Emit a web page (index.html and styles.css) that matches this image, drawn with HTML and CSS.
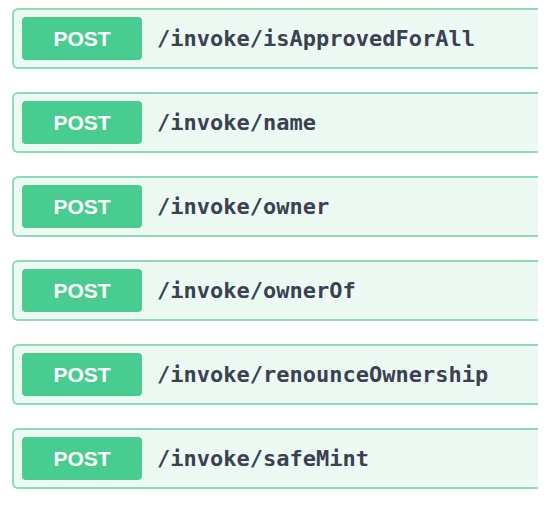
FILE: index.html
```html
<!DOCTYPE html>
<html>
<head>
<meta charset="utf-8">
<link rel="stylesheet" href="styles.css">
</head>
<body>
<div class="list">
  <div class="op"><span class="method">POST</span><span class="path">/invoke/isApprovedForAll</span></div>
  <div class="op"><span class="method">POST</span><span class="path">/invoke/name</span></div>
  <div class="op"><span class="method">POST</span><span class="path">/invoke/owner</span></div>
  <div class="op"><span class="method">POST</span><span class="path">/invoke/ownerOf</span></div>
  <div class="op"><span class="method">POST</span><span class="path">/invoke/renounceOwnership</span></div>
  <div class="op"><span class="method">POST</span><span class="path">/invoke/safeMint</span></div>
</div>
</body>
</html>
```

FILE: styles.css
```css
html, body {
  margin: 0;
  padding: 0;
  background: #ffffff;
}
.list {
  display: flex;
  flex-direction: column;
  gap: 23px;
  padding: 8px 0 0 12px;
  width: 526px;
}
.op {
  box-sizing: border-box;
  height: 61px;
  display: flex;
  align-items: center;
  padding: 0 8px;
  border: 2px solid #8ddcb7;
  border-right: none;
  border-radius: 6px 0 0 6px;
  background: #edfaf4;
}
.method {
  box-sizing: border-box;
  width: 120px;
  height: 43px;
  display: flex;
  align-items: center;
  justify-content: center;
  background: #49cc90;
  border-radius: 4px;
  color: #ffffff;
  font-family: "Liberation Sans", Arial, sans-serif;
  font-weight: 700;
  font-size: 21px;
}
.path {
  margin-left: 15px;
  font-family: "DejaVu Sans Mono", monospace;
  font-weight: 700;
  font-size: 22px;
  color: #3b4151;
}
```
